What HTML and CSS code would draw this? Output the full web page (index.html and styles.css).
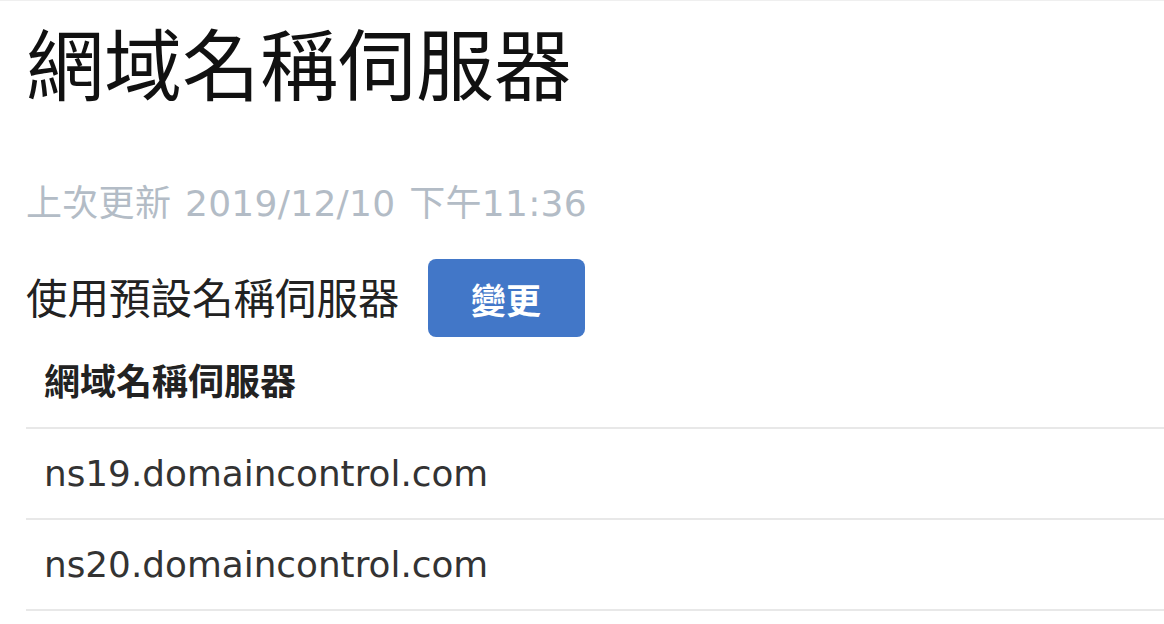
FILE: index.html
```html
<!DOCTYPE html>
<html lang="zh-Hant">
<head>
<meta charset="utf-8">
<title>網域名稱伺服器</title>
<link rel="stylesheet" href="styles.css">
</head>
<body>
<main class="page">
  <h1 class="title">網域名稱伺服器</h1>
  <p class="updated">上次更新 2019/12/10 下午11:36</p>
  <div class="mode">
    <span class="mode-label">使用預設名稱伺服器</span>
    <button class="btn-change" type="button">變更</button>
  </div>
  <table class="ns-table">
    <thead>
      <tr><th>網域名稱伺服器</th></tr>
    </thead>
    <tbody>
      <tr><td>ns19.domaincontrol.com</td></tr>
      <tr><td>ns20.domaincontrol.com</td></tr>
    </tbody>
  </table>
</main>
</body>
</html>
```

FILE: styles.css
```css
html, body {
  margin: 0;
  padding: 0;
  background: #ffffff;
}
body {
  border-top: 1px solid #efefef;
  font-family: "Noto Sans", "Noto Sans CJK TC", sans-serif;
  color: #1a1a1a;
}
.page {
  padding-left: 26px;
}
.title {
  margin: 25px 0 0;
  font-size: 78px;
  line-height: 78px;
  font-weight: 400;
  color: #111111;
}
.updated {
  margin: 80px 0 0;
  font-family: "DejaVu Sans", "Noto Sans CJK TC", sans-serif;
  font-size: 36px;
  line-height: 40px;
  letter-spacing: 0.3px;
  word-spacing: 2px;
  color: #b3bcc6;
}
.mode {
  display: flex;
  align-items: center;
  gap: 28px;
  margin-top: 35px;
}
.mode-label {
  font-size: 41.5px;
  line-height: 48px;
  color: #222222;
}
.btn-change {
  width: 157px;
  height: 78px;
  border: none;
  border-radius: 8px;
  background: #4277c8;
  color: #ffffff;
  font-family: inherit;
  font-size: 35px;
  font-weight: 700;
  padding: 0;
}
.ns-table {
  width: 100%;
  border-collapse: collapse;
  margin-top: 18px;
}
.ns-table th {
  text-align: left;
  font-size: 36px;
  font-weight: 700;
  line-height: 40px;
  padding: 7px 0 25px 18px;
  border-bottom: 2px solid #e8e8e8;
  color: #222222;
}
.ns-table td {
  font-family: "DejaVu Sans", "Noto Sans CJK TC", sans-serif;
  font-size: 35.8px;
  line-height: 44px;
  height: 91px;
  padding: 0 0 0 18px;
  border-bottom: 2px solid #e8e8e8;
  color: #333333;
  box-sizing: border-box;
}
```
